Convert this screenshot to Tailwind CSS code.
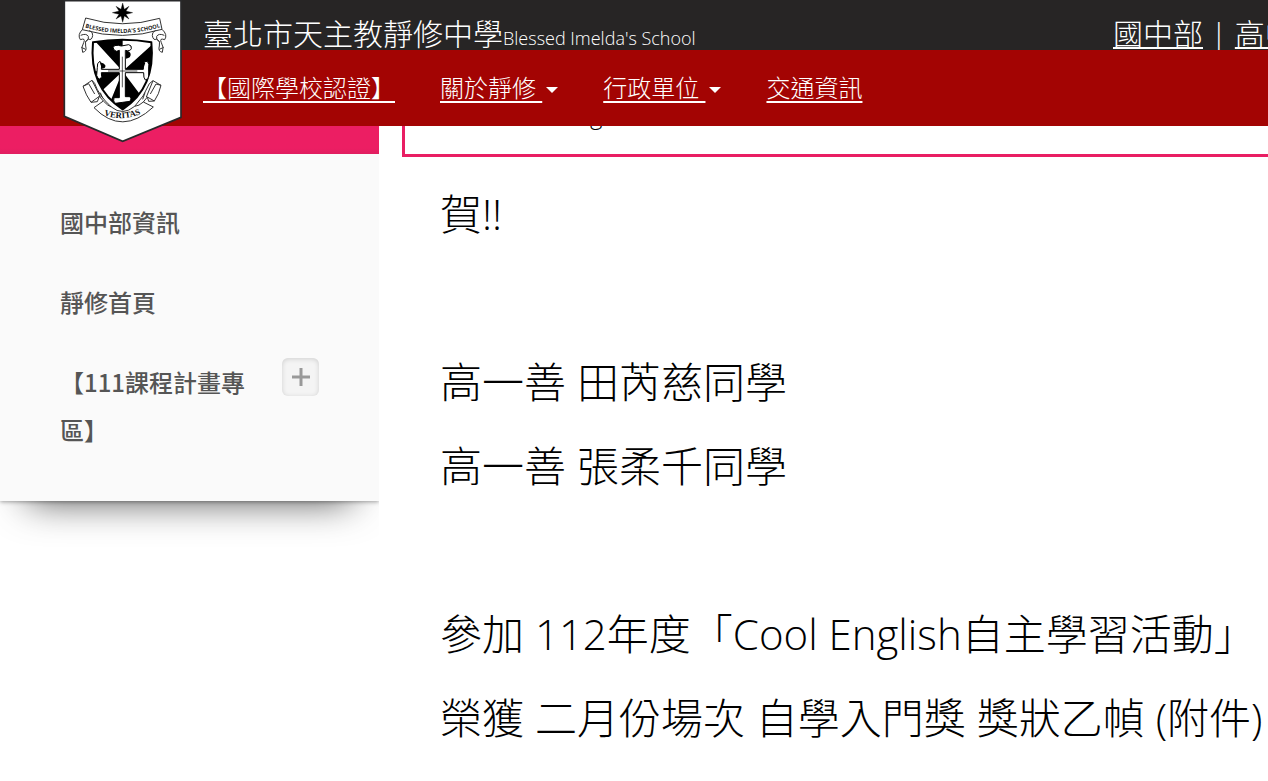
<!DOCTYPE html>
<html lang="zh-Hant">
<head>
<meta charset="utf-8">
<meta name="viewport" content="width=device-width, initial-scale=1">
<title>臺北市天主教靜修中學</title>
<script src="https://cdn.jsdelivr.net/npm/@tailwindcss/browser@4"></script>
</head>
<body class="min-h-screen overflow-x-hidden bg-white font-['Open_Sans','Noto_Sans_CJK_TC',sans-serif] font-light text-black">
<header class="relative z-10 text-white">
  <div class="flex h-[50px] items-end bg-[#272525] pl-[203px] whitespace-nowrap">
    <h1 class="flex items-baseline text-[30px] leading-6 font-light">臺北市天主教靜修中學<span class="text-lg leading-6">Blessed Imelda's School</span></h1>
    <nav class="ml-auto w-[155px] shrink-0 text-[30px] leading-8"><a href="#" class="underline decoration-2 underline-offset-2">國中部</a> | <a href="#" class="underline decoration-2 underline-offset-2">高中部</a></nav>
  </div>
  <nav class="relative flex h-[76px] items-center gap-[45px] bg-[#a30403] pl-[203px] text-2xl whitespace-nowrap">
    <a href="#" class="underline decoration-2 underline-offset-4">【國際學校認證】</a>
    <a href="#" class="flex items-center gap-1"><span class="whitespace-pre underline decoration-2 underline-offset-4">關於靜修 </span><svg class="mt-1 w-3" viewBox="0 0 12 6" fill="currentColor" aria-hidden="true"><path d="M0 0h12L6 6z"/></svg></a>
    <a href="#" class="flex items-center gap-1"><span class="whitespace-pre underline decoration-2 underline-offset-4">行政單位 </span><svg class="mt-1 w-3" viewBox="0 0 12 6" fill="currentColor" aria-hidden="true"><path d="M0 0h12L6 6z"/></svg></a>
    <a href="#" class="underline decoration-2 underline-offset-4">交通資訊</a>
  </nav>
  <a href="#" aria-label="靜修中學" class="absolute top-0 left-[50px]">
    <svg class="size-[150px]" viewBox="0 0 450 450" fill="none" stroke="#333" stroke-width="3">
      <defs>
        <path id="arcTop" d="M96 80Q216 118 340 79"/>
        <path id="arcBottom" d="M150 341Q216 370 284 337"/>
        <clipPath id="shield"><path d="M129 127Q218 112 304 127Q318 262 218 328Q116 262 129 127z"/></clipPath>
      </defs>
      <path d="M43 2H393V352L218 424L43 349z" fill="#fff" stroke="#29292b" stroke-width="5"/>
      <path d="M218 9L223 28L237 19L228 33L248 38L228 43L237 57L223 48L218 67L213 48L198 57L207 43L187 38L207 33L198 19L213 28z" fill="#000" stroke="#000" stroke-width="1"/>
      <path d="M107 54Q216 88 329 55L336 88Q218 124 97 89z"/>
      <path d="M98 88Q81 104 91 119Q108 113 101 128Q92 142 98 157Q112 154 107 138Q102 125 115 117Q125 123 128 107Q130 97 118 91M92 106Q109 99 115 109Q119 118 106 125M94 142L107 148M336 88Q354 104 344 119Q327 113 334 128Q343 142 337 157Q323 154 328 138Q333 125 320 117Q310 123 307 107Q305 97 317 91M343 106Q326 99 320 109Q316 118 329 125M341 142L328 148"/>
      <text fill="#222" stroke="none" font-family="Open Sans, sans-serif" font-size="17" font-weight="700"><textPath href="#arcTop" startOffset="50%" text-anchor="middle">BLESSED IMELDA'S SCHOOL</textPath></text>
      <g clip-path="url(#shield)" stroke="none">
        <path fill="#fff" d="M100 100H340V340H100z"/>
        <path fill="#000" d="M218 214L134 122V110H218zM218 214L306 134V214zM218 214H110L152 276zM218 214V340L182 302zM218 214L272 286L218 340z"/>
      </g>
      <path d="M129 127Q218 112 304 127Q318 262 218 328Q116 262 129 127z" stroke="#000" stroke-width="6"/>
      <g fill="#fff" stroke="#000" stroke-width="3">
        <path d="M208 208V151L200 154Q190 152 189 142Q193 134 205 136L214 138L236 134Q246 136 244 146Q240 155 226 151V208H280L279 192Q282 182 292 184Q299 192 296 204V228Q296 238 286 240Q280 234 281 218H226V290H240Q246 296 240 304L218 307L196 310Q188 304 192 293H208V218H154Q158 232 150 238Q142 236 140 226L142 202Q140 188 150 184Q158 190 154 208H208z"/>
      </g>
      <path d="M228 152V176Q243 174 242 162Q240 153 228 152zM206 152V172Q194 186 192 174Q186 164 206 152zM156 206Q168 206 166 196Q158 184 150 190zM280 206Q262 204 270 192Q278 182 286 188z" fill="#000" stroke="none"/>
      <path d="M174 213H262M217 170V262" stroke="#000" stroke-width="2"/>
      <path d="M126 241L99 259Q108 286 123 307L148 289L160 303L132 323Q216 409 310 321L280 306L292 291L313 303Q327 283 333 256L309 242L298 251Q282 291 254 319Q218 349 184 321Q145 285 134 250z" fill="#fff"/>
      <path d="M126 241L151 291M309 242L289 291M99 259L116 251L134 282M333 256L318 252L301 282M148 289L142 305L123 307M292 291L296 304L313 303M151 278L158 295M285 278L278 298M160 303Q174 318 184 321M280 306Q267 318 254 319"/>
      <text fill="#111" stroke="none" font-family="Liberation Serif, serif" font-size="26" font-weight="700"><textPath href="#arcBottom" startOffset="50%" text-anchor="middle">VERITAS</textPath></text>
    </svg>
  </a>
</header>
<div class="flex items-start">
  <aside class="w-[379px] shrink-0">
    <div class="h-7 bg-linear-to-b from-[#ec1e63] from-80% to-[#e01e60]"></div>
    <ul class="flex flex-col gap-8 bg-[#fafafa] px-[60px] pt-11 pb-[47px] font-['Noto_Sans_CJK_TC',sans-serif] text-2xl leading-12 font-medium text-[#555]">
      <li><a href="#">國中部資訊</a></li>
      <li><a href="#">靜修首頁</a></li>
      <li class="flex items-start justify-between">
        <a href="#" class="w-[190px]">【111課程計畫專區】</a>
        <button type="button" aria-label="展開" class="flex h-[38px] w-[37px] items-center justify-center rounded-md bg-[#f4f4f4] text-[#999] shadow-[inset_0_1px_5px_rgba(0,0,0,0.15)]">
          <svg class="size-[18px]" viewBox="0 0 18 18" fill="none" stroke="currentColor" stroke-width="3" aria-hidden="true"><path d="M9 0v18M0 9h18"/></svg>
        </button>
      </li>
    </ul>
    <div class="h-12 overflow-hidden" aria-hidden="true">
      <div class="-mt-20 h-20 shadow-[0_1px_4px_rgba(0,0,0,0.35)]">
        <div class="mx-7 h-20 shadow-[0_0_38px_rgba(0,0,0,0.7)]"></div>
      </div>
    </div>
  </aside>
  <main class="min-w-0 grow pl-[23px] whitespace-nowrap">
    <div class="-mt-5 -mr-2 h-[51px] border-[3px] border-[#e91e63] pl-[185px] text-2xl leading-3">g</div>
    <div class="pt-[15px] pl-[38px] text-[42px] leading-[84px]">
      <p>賀!!</p>
      <p class="mt-[84px]">高一善 田芮慈同學</p>
      <p>高一善 張柔千同學</p>
      <p class="mt-[84px]">參加 112年度「Cool English自主學習活動」</p>
      <p>榮獲 二月份場次 自學入門獎 獎狀乙幀 (附件)</p>
    </div>
  </main>
</div>
</body>
</html>
